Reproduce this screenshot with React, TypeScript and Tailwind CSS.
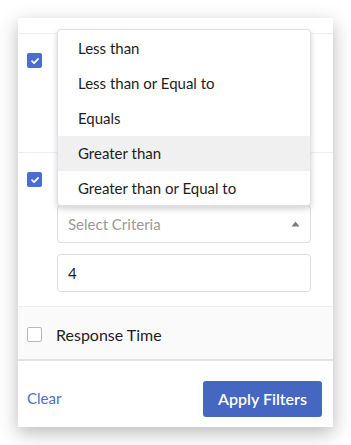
import React from "react";

const font = { fontFamily: "Lato, 'Noto Sans', sans-serif" };

function Checked() {
  return (
    <div className="w-[15px] h-[15px] rounded-[2px] bg-[#4a6dcf] flex items-center justify-center">
      <svg width="10" height="10" viewBox="0 0 10 10">
        <path d="M2 5.2 L4.1 7.2 L8.2 2.8" stroke="white" strokeWidth="1.7" fill="none" strokeLinecap="round" strokeLinejoin="round" />
      </svg>
    </div>
  );
}

export default function App() {
  const items = ["Less than", "Less than or Equal to", "Equals", "Greater than", "Greater than or Equal to"];
  return (
    <div className="w-[351px] h-[445px] bg-white p-[18px]" style={font}>
      <div className="relative w-[315px] h-[409px] bg-white shadow-[0_6px_18px_rgba(0,0,0,0.28)] flex flex-col">
        <div className="h-[16px] border-b border-[#eceef2]" />
        <div className="h-[119px] border-b border-[#eceef2] pl-[9px] pt-[19px]">
          <Checked />
        </div>
        <div className="h-[154px] border-b border-[#eceef2] pt-[19px] flex flex-col">
          <div className="pl-[9px]"><Checked /></div>
          <div className="ml-[39px] mt-[18px] w-[254px] h-[38px] border border-[#dcdde3] rounded-[4px] flex items-center justify-between pl-[10px] pr-[10px]">
            <span className="text-[15px] text-[#9a9a9a]">Select Criteria</span>
            <svg width="9" height="6" viewBox="0 0 9 6"><path d="M0.5 5.5 L4.5 0.5 L8.5 5.5 Z" fill="#7a7a7a" /></svg>
          </div>
          <div className="ml-[39px] mt-[11px] w-[254px] h-[38px] border border-[#dcdde3] rounded-[4px] flex items-center pl-[10px]">
            <span className="text-[15px] text-[#222]">4</span>
          </div>
        </div>
        <div className="h-[54px] bg-[#fafafa] border-b-2 border-[#e2e2e2] flex items-center pl-[9px] pt-[3px]">
          <div className="w-[15px] h-[15px] rounded-[2px] border border-[#b9b9b9] bg-white" />
          <span className="ml-[14px] text-[16px] text-[#1e1e1e]">Response Time</span>
        </div>
        <div className="flex-1 flex items-center justify-between pl-[9px] pr-[11px] pt-[9px]">
          <span className="text-[15px] text-[#4a6dcf]">Clear</span>
          <div className="w-[119px] h-[36px] rounded-[3px] bg-[#4567c2] flex items-center justify-center">
            <span className="text-[16px] text-white font-semibold">Apply Filters</span>
          </div>
        </div>
        <div className="absolute left-[39px] top-[11px] w-[254px] h-[177px] bg-white border border-[#dfe1e8] rounded-[4px] shadow-[0_3px_6px_rgba(0,0,0,0.18)] flex flex-col pt-[1px] overflow-hidden">
          {items.map((t, i) => (
            <div key={t} className={"h-[35px] shrink-0 flex items-center pl-[20px] text-[15px] text-[#1e1e1e] " + (i === 3 ? "bg-[#f0f0f0]" : "")}>
              {t}
            </div>
          ))}
        </div>
      </div>
    </div>
  );
}
